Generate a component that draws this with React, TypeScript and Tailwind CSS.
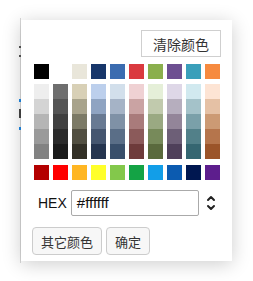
import React from "react";

const top = ["#000000", "#ffffff", "#e9e6da", "#17366a", "#3b6cb0", "#da3a3f", "#8aaf4d", "#6d4f91", "#3a9fba", "#f68a3f"];
const cols = [
  ["#eeeeee", "#d4d4d4", "#b5b5b5", "#9a9a9a", "#828282"],
  ["#6e6e6e", "#555555", "#404040", "#2b2b2b", "#1b1b1b"],
  ["#d8d0b6", "#a8a38b", "#7c7a66", "#524f41", "#333026"],
  ["#bccfec", "#8fa4c2", "#687a93", "#455670", "#253550"],
  ["#d2dfeb", "#a5b3c6", "#7f91a6", "#5a6e87", "#394f6b"],
  ["#efd1d3", "#caa3a3", "#a97b7b", "#8b5a5a", "#6e3b3b"],
  ["#e5efd8", "#c1caad", "#9aa982", "#778a5a", "#5a6a3d"],
  ["#ded7e7", "#b6aebe", "#938599", "#6d5f77", "#4f405a"],
  ["#d1e9ef", "#a4c2c9", "#7aa0a9", "#528089", "#356671"],
  ["#fde4d4", "#e5c1a5", "#cc9a74", "#b5754c", "#9b5429"],
];
const bottom = ["#b40000", "#ff0000", "#ffb623", "#ffff2a", "#83c84b", "#14a345", "#129ee8", "#0c5bb0", "#001750", "#5d1e8d"];

const cjk = { fontFamily: '"Noto Sans CJK SC", "Noto Sans", sans-serif' };

export default function App() {
  return (
    <div className="relative w-[253px] h-[281px] bg-white overflow-hidden" style={{ fontFamily: '"Liberation Sans", Arial, sans-serif' }}>
      {/* background page bits */}
      <div className="absolute left-[20px] top-[18px] w-[1px] h-[245px] bg-[#d8d8d8]" />
      <div className="absolute left-[19px] top-[46px] w-[2px] h-[2px] bg-[#555]" />
      <div className="absolute left-[19px] top-[55px] w-[2px] h-[2px] bg-[#555]" />
      <div className="absolute left-[19px] top-[99px] w-[2px] h-[3px] bg-[#1e88e5]" />
      <div className="absolute left-[19px] top-[109px] w-[2px] h-[9px] bg-[#444]" />
      <div className="absolute left-[19px] top-[127px] w-[2px] h-[3px] bg-[#1e88e5]" />

      <div className="relative ml-[21px] mt-[20px] w-[211px] h-[241px] bg-white shadow-[0_3px_18px_rgba(0,0,0,0.2)] pl-[13px] pr-[12px] pt-[10px]">
        <div className="flex justify-end -mr-[1px]">
          <button className="w-[80px] h-[27px] border border-[#cfcfcf] bg-white text-[14px] text-[#333] leading-none" style={cjk}>
            清除颜色
          </button>
        </div>
        <div className="mt-[7px] flex gap-x-[4px]">
          {top.map((c) => (
            <div key={c} className="w-[15px] h-[15px]" style={{ backgroundColor: c }} />
          ))}
        </div>
        <div className="mt-[5px] flex gap-x-[4px]">
          {cols.map((col, i) => (
            <div key={i} className="flex flex-col">
              {col.map((c) => (
                <div key={c} className="w-[15px] h-[15px]" style={{ backgroundColor: c }} />
              ))}
            </div>
          ))}
        </div>
        <div className="mt-[6px] flex gap-x-[4px]">
          {bottom.map((c) => (
            <div key={c} className="w-[15px] h-[15px]" style={{ backgroundColor: c }} />
          ))}
        </div>
        <div className="mt-[10px] flex items-center ml-[4px]">
          <span className="text-[14px] text-[#111] leading-none">HEX</span>
          <div className="ml-[4px] w-[128px] h-[26px] border border-[#aaaaaa] rounded-[2px] flex items-center pl-[5px] text-[15px] text-[#111]">
            #ffffff
          </div>
          <svg className="ml-[7px]" width="10" height="18" viewBox="0 0 10 18" fill="none" stroke="#222" strokeWidth="2" strokeLinecap="round" strokeLinejoin="round">
            <path d="M2 6 L5 3 L8 6" />
            <path d="M2 12 L5 15 L8 12" />
          </svg>
        </div>
        <div className="mt-[11px] -ml-[2px] flex gap-x-[4px]">
          <button className="w-[70px] h-[28px] rounded-[4px] border border-[#cccccc] bg-[#f7f7f7] text-[13px] text-[#333] leading-none" style={cjk}>
            其它颜色
          </button>
          <button className="w-[44px] h-[28px] rounded-[4px] border border-[#cccccc] bg-[#f7f7f7] text-[13px] text-[#333] leading-none" style={cjk}>
            确定
          </button>
        </div>
      </div>
    </div>
  );
}
